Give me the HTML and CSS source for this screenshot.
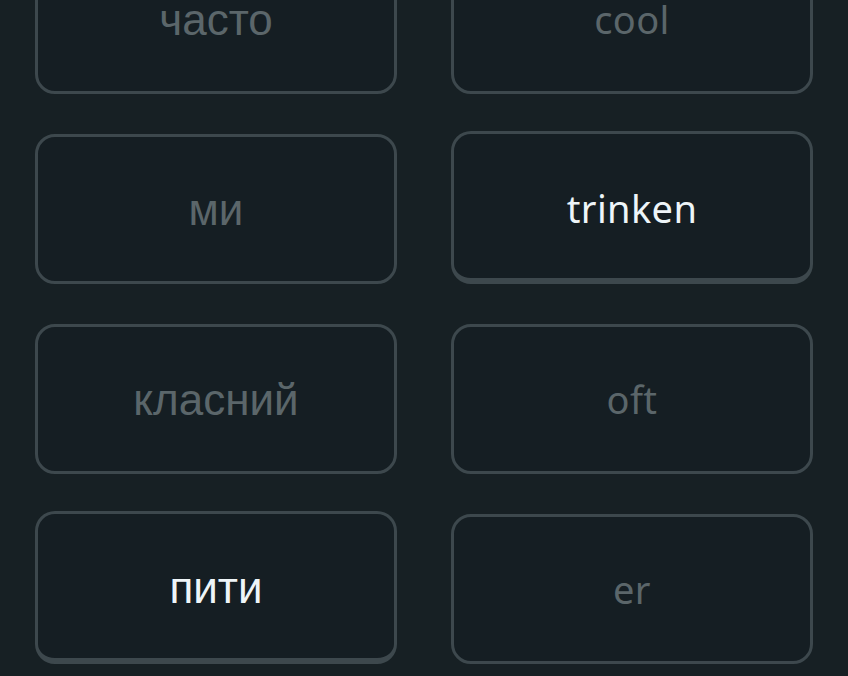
FILE: index.html
```html
<!DOCTYPE html>
<html>

<head>
    <title>Match pairs</title>
    <meta charset="utf-8" />
    <meta name="viewport" content="width=device-width,initial-scale=1" />
    <link rel="stylesheet" href="styles.css">
</head>

<body>

    <div class="board">
        <div class="tile uk">часто</div>
        <div class="tile de">cool</div>

        <div class="tile uk">ми</div>
        <div class="tile de selected">trinken</div>

        <div class="tile uk">класний</div>
        <div class="tile de">oft</div>

        <div class="tile uk selected">пити</div>
        <div class="tile de">er</div>
    </div>

</body>

</html>
```

FILE: styles.css
```css
body {
    margin: 0;
    background-color: #172024;
    overflow: hidden;
}

div.board {
    margin: -56px 0 0 0;
    padding: 0 35px;
    display: grid;
    grid-template-columns: 1fr 1fr;
    column-gap: 54px;
    row-gap: 40px;
}

div.tile {
    box-sizing: border-box;
    height: 150px;
    display: flex;
    align-items: center;
    justify-content: center;
    border: 3px solid #3d484d;
    border-radius: 20px;
    background-color: #151e23;
    color: #5b666a;
    font-size: 38px;
}

div.uk {
    font-family: "Liberation Sans", Arial, sans-serif;
    font-size: 44px;
    padding-top: 2px;
}

div.de {
    font-family: "Noto Sans", sans-serif;
    letter-spacing: 0.01em;
}

div.selected {
    height: 153px;
    margin-top: -3px;
    border-bottom-width: 6px;
    padding-top: 3px;
    color: #eef5f8;
}
```
